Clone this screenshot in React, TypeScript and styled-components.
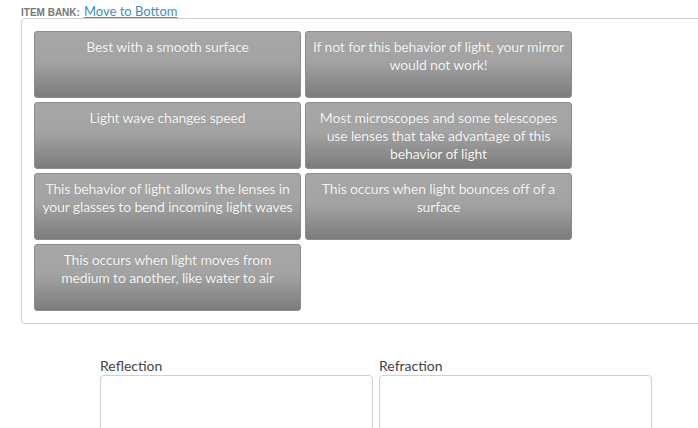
import React from "react";
import styled, { createGlobalStyle } from "styled-components";

const Global = createGlobalStyle`
  html, body { margin: 0; padding: 0; background: #fff; overflow: hidden; }
  body { font-family: "Lato", "Open Sans", sans-serif; }
`;

const Page = styled.div`
  width: 698px;
  height: 428px;
  overflow: hidden;
  padding: 3px 0 0 21px;
  box-sizing: border-box;
`;

const Header = styled.div`
  display: flex;
  align-items: baseline;
  gap: 4px;
  height: 15px;
`;

const BankLabel = styled.span`
  font-family: "Liberation Sans", Arial, sans-serif;
  font-weight: bold;
  font-size: 10px;
  color: #777;
`;

const MoveLink = styled.a`
  font-family: "Lato", sans-serif;
  font-size: 13px;
  color: #3d8fc4;
  text-decoration: underline;
  cursor: pointer;
`;

const Bank = styled.div`
  width: 700px;
  border: 1px solid #cfcfcf;
  border-radius: 4px;
  padding: 12px;
  box-sizing: border-box;
  display: grid;
  grid-template-columns: 267px 267px;
  grid-auto-rows: 67px;
  gap: 4px 4px;
`;

const Card = styled.div`
  border: 1px solid #8c8c8c;
  border-radius: 3px;
  background: linear-gradient(to bottom, #a7a7a7 0%, #a3a3a3 45%, #7c7c7c 100%);
  color: #f6f6f6;
  font-size: 14px;
  letter-spacing: -0.15px;
  line-height: 18px;
  text-align: center;
  white-space: pre-line;
  padding: 6px 2px 0;
  box-sizing: border-box;
  text-shadow: 0 0 1px rgba(0,0,0,0.2);
`;

const Zones = styled.div`
  display: flex;
  gap: 6px;
  padding: 33px 0 0 79px;
`;

const Zone = styled.div`
  display: flex;
  flex-direction: column;
  width: 273px;
`;

const ZoneLabel = styled.div`
  font-size: 14px;
  color: #444;
  line-height: 18px;
  height: 18px;
`;

const ZoneBox = styled.div`
  height: 80px;
  border: 1px solid #d0d0d0;
  border-radius: 4px;
`;

const items = [
  "Best with a smooth surface",
  "If not for this behavior of light, your mirror\nwould not work!",
  "Light wave changes speed",
  "Most microscopes and some telescopes\nuse lenses that take advantage of this\nbehavior of light",
  "This behavior of light allows the lenses in\nyour glasses to bend incoming light waves",
  "This occurs when light bounces off of a\nsurface",
  "This occurs when light moves from\nmedium to another, like water to air",
];

export default function App() {
  return (
    <Page>
      <Global />
      <Header>
        <BankLabel>ITEM BANK:</BankLabel>
        <MoveLink>Move to Bottom</MoveLink>
      </Header>
      <Bank>
        {items.map((t) => (
          <Card key={t}>{t}</Card>
        ))}
      </Bank>
      <Zones>
        <Zone>
          <ZoneLabel>Reflection</ZoneLabel>
          <ZoneBox />
        </Zone>
        <Zone>
          <ZoneLabel>Refraction</ZoneLabel>
          <ZoneBox />
        </Zone>
      </Zones>
    </Page>
  );
}
